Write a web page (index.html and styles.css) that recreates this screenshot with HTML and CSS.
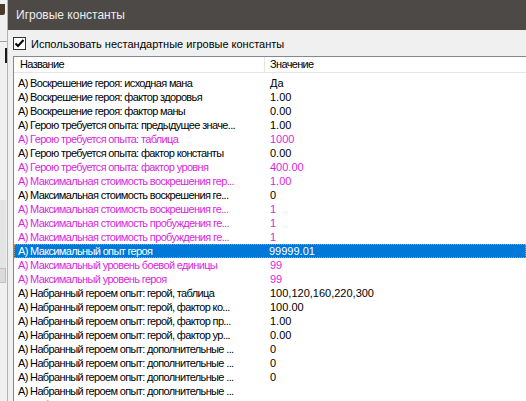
FILE: index.html
```html
<!DOCTYPE html>
<html lang="ru">
<head>
    <meta charset="UTF-8">
    <meta name="viewport" content="width=device-width, initial-scale=1.0">
    <title>Игровые константы</title>
    <link rel="stylesheet" href="styles.css">
</head>
<body>
    <div class="screen">
        <!-- кусок окна под диалогом -->
        <div class="behind">
            <div class="behind-icon"></div>
            <div class="behind-line"></div>
            <div class="behind-bar"></div>
            <div class="behind-scroll"></div>
            <div class="behind-thumb"></div>
        </div>

        <div class="dialog">
            <div class="titlebar">Игровые константы</div>
            <div class="content">
                <label class="check-row">
                    <span class="checkbox">
                        <svg width="11" height="11" viewBox="0 0 11 11">
                            <path d="M1.5 5.5 L4 8 L9.5 2" fill="none" stroke="#000" stroke-width="2"/>
                        </svg>
                    </span>
                    Использовать нестандартные игровые константы
                </label>

                <div class="list">
                    <div class="list-head">
                        <div class="col-name">Название</div>
                        <div class="col-value">Значение</div>
                    </div>
                    <div class="rows">
                        <div class="row"><div class="name">А) Воскрешение героя: исходная мана</div><div class="value">Да</div></div>
                        <div class="row"><div class="name">А) Воскрешение героя: фактор здоровья</div><div class="value">1.00</div></div>
                        <div class="row"><div class="name">А) Воскрешение героя: фактор маны</div><div class="value">0.00</div></div>
                        <div class="row"><div class="name">А) Герою требуется опыта: предыдущее значе...</div><div class="value">1.00</div></div>
                        <div class="row changed"><div class="name">А) Герою требуется опыта: таблица</div><div class="value">1000</div></div>
                        <div class="row"><div class="name">А) Герою требуется опыта: фактор константы</div><div class="value">0.00</div></div>
                        <div class="row changed"><div class="name">А) Герою требуется опыта: фактор уровня</div><div class="value">400.00</div></div>
                        <div class="row changed"><div class="name">А) Максимальная стоимость воскрешения гер...</div><div class="value">1.00</div></div>
                        <div class="row"><div class="name">А) Максимальная стоимость воскрешения ге...</div><div class="value">0</div></div>
                        <div class="row changed"><div class="name">А) Максимальная стоимость воскрешения ге...</div><div class="value">1</div></div>
                        <div class="row changed"><div class="name">А) Максимальная стоимость пробуждения ге...</div><div class="value">1</div></div>
                        <div class="row changed"><div class="name">А) Максимальная стоимость пробуждения ге...</div><div class="value">1</div></div>
                        <div class="row selected"><div class="name">А) Максимальный опыт героя</div><div class="value">99999.01</div></div>
                        <div class="row changed"><div class="name">А) Максимальный уровень боевой единицы</div><div class="value">99</div></div>
                        <div class="row changed"><div class="name">А) Максимальный уровень героя</div><div class="value">99</div></div>
                        <div class="row"><div class="name">А) Набранный героем опыт: герой, таблица</div><div class="value">100,120,160,220,300</div></div>
                        <div class="row"><div class="name">А) Набранный героем опыт: герой, фактор ко...</div><div class="value">100.00</div></div>
                        <div class="row"><div class="name">А) Набранный героем опыт: герой, фактор пр...</div><div class="value">1.00</div></div>
                        <div class="row"><div class="name">А) Набранный героем опыт: герой, фактор ур...</div><div class="value">0.00</div></div>
                        <div class="row"><div class="name">А) Набранный героем опыт: дополнительные ...</div><div class="value">0</div></div>
                        <div class="row"><div class="name">А) Набранный героем опыт: дополнительные ...</div><div class="value">0</div></div>
                        <div class="row"><div class="name">А) Набранный героем опыт: дополнительные ...</div><div class="value">0</div></div>
                        <div class="row"><div class="name">А) Набранный героем опыт: дополнительные ...</div><div class="value"></div></div>
                        <div class="row"><div class="name">А) Набранный героем опыт: дополнительные ...</div><div class="value"></div></div>
                    </div>
                </div>
            </div>
        </div>
    </div>
</body>
</html>
```

FILE: styles.css
```css
body {
    margin: 0;
    font-family: "Liberation Sans", Arial, sans-serif;
    font-size: 12px;
    background-color: #f0f0f0;
    overflow: hidden;
}

.screen {
    display: flex;
    width: 526px;
    height: 401px;
    overflow: hidden;
}

/* окно на заднем плане */
.behind {
    position: relative;
    width: 7px;
    flex: none;
    background-color: #f0f0f0;
    border-right: 1px solid #b4b4b4;
}

.behind-icon {
    position: absolute;
    left: 0;
    top: 4px;
    width: 5px;
    height: 11px;
    background-color: #4a3c2c;
    border-radius: 0 0 2px 0;
}

.behind-line {
    position: absolute;
    left: 0;
    top: 41px;
    width: 7px;
    height: 1px;
    background-color: #a0a0a0;
}

.behind-bar {
    position: absolute;
    left: 5px;
    top: 48px;
    width: 2px;
    height: 15px;
    background-color: #1a1a1a;
}

.behind-scroll {
    position: absolute;
    left: 0;
    top: 200px;
    width: 6px;
    height: 83px;
    background-color: #e4e4e4;
}

.behind-thumb {
    position: absolute;
    left: 0;
    top: 268px;
    width: 5px;
    height: 13px;
    background-color: #dadada;
    border: 1px solid #c0c0c0;
    border-left: none;
}

.dialog {
    flex: 1;
    min-width: 0;
    display: flex;
    flex-direction: column;
}

.titlebar {
    height: 30px;
    flex: none;
    display: flex;
    align-items: center;
    padding-left: 8px;
    background-color: #4c4946;
    color: #ececec;
    font-size: 12px;
}

.content {
    padding: 7px 0 0 5px;
}

.check-row {
    display: flex;
    align-items: center;
    gap: 5px;
    height: 13px;
    margin-bottom: 6px;
    font-size: 11px;
    color: #000;
}

.checkbox {
    width: 11px;
    height: 11px;
    border: 1px solid #333;
    background-color: white;
    display: flex;
}

.list {
    border: 1px solid #828790;
    border-right: none;
    background-color: white;
    font-size: 11px;
    letter-spacing: -0.65px;
}

.list-head {
    display: flex;
    height: 15px;
    line-height: 15px;
    border-bottom: 1px solid #e5e5e5;
}

.col-name {
    width: 244px;
    padding-left: 6px;
}

.col-value {
    border-left: 1px solid #e5e5e5;
    padding-left: 5px;
}

.rows {
    padding-top: 3px;
}

.row {
    display: flex;
    height: 14px;
    line-height: 14px;
    box-sizing: border-box;
    color: #000;
    white-space: nowrap;
}

.row .name {
    width: 252px;
    padding-left: 4px;
    overflow: hidden;
}

.row .value {
    letter-spacing: 0;
}

.row.changed {
    color: #dc1fdc;
}

.row.selected {
    background-color: #0078d7;
    color: white;
    border: 1px dotted #f08c2a;
    line-height: 12px;
}

.row.selected .name {
    width: 251px;
    padding-left: 3px;
}
```
